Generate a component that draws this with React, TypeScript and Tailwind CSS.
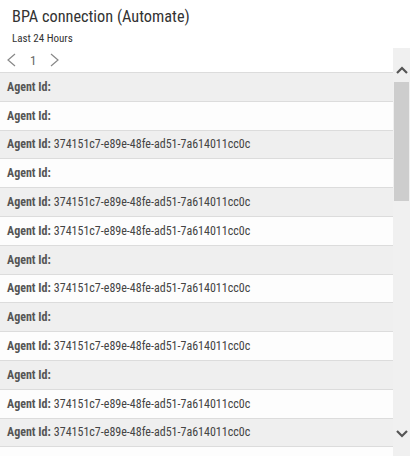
const AGENT = '374151c7-e89e-48fe-ad51-7a614011cc0c';

// which rows carry an id (true) and which are blank; null = row cut off below the fold
const rows: (boolean | null)[] = [false, false, true, false, true, true, false, true, false, true, false, true, true, null];

function Chevron({ dir }: { dir: 'up' | 'down' }) {
  return (
    <svg width="12" height="8" viewBox="0 0 12 8" className="block">
      <polyline
        points={dir === 'up' ? '1,7 6,2 11,7' : '1,1 6,6 11,1'}
        fill="none"
        stroke="#555"
        strokeWidth="2.2"
      />
    </svg>
  );
}

export default function App() {
  return (
    <div className="w-[410px] h-[456px] overflow-hidden bg-white font-['Roboto_Condensed',Roboto,sans-serif] text-[#333]">
      {/* ── Header ── */}
      <div className="pl-3 pt-[6px]">
        <div className="text-[16.3px] leading-[22px] text-[#333]">BPA connection (Automate)</div>
        <div className="text-[11px] leading-[14px] mt-[4px] text-[#333]">Last 24 Hours</div>
      </div>

      <div className="flex mt-[2px] h-[408px]">
        {/* ── List ── */}
        <div className="w-[393px] flex flex-col overflow-hidden">
          <div className="h-[24px] shrink-0 flex items-center pl-[6px] gap-[14px] text-[#777]">
            <svg width="10" height="14" viewBox="0 0 10 14">
              <polyline points="9,1 2,7 9,13" fill="none" stroke="#888" strokeWidth="1.2" />
            </svg>
            <span className="text-[13px] leading-none text-[#666] w-[6px]">1</span>
            <svg width="10" height="14" viewBox="0 0 10 14">
              <polyline points="1,1 8,7 1,13" fill="none" stroke="#888" strokeWidth="1.2" />
            </svg>
          </div>
          <div className="shrink-0 border-t border-[#dcdcdc]">
            {rows.map((hasId, i) => (
              <div
                key={i}
                className={`h-[28.8px] flex items-center pl-[7px] border-b border-[#dcdcdc] text-[12px] text-[#444] ${
                  i % 2 === 0 ? 'bg-[#efefef]' : 'bg-[#fdfdfd]'
                }`}
              >
                {hasId !== null && <span className="font-bold text-[#555]">Agent Id:</span>}
                {hasId && <span className="ml-[3px]">{AGENT}</span>}
              </div>
            ))}
          </div>
        </div>

        {/* ── Scrollbar ── */}
        <div className="w-[17px] bg-[#f0f0f0] flex flex-col items-center">
          <div className="mt-[18px]">
            <Chevron dir="up" />
          </div>
          <div className="mt-[8px] w-[15px] h-[119px] bg-[#cdcdcd]" />
          <div className="mt-auto mb-[18px]">
            <Chevron dir="down" />
          </div>
        </div>
      </div>
    </div>
  );
}
